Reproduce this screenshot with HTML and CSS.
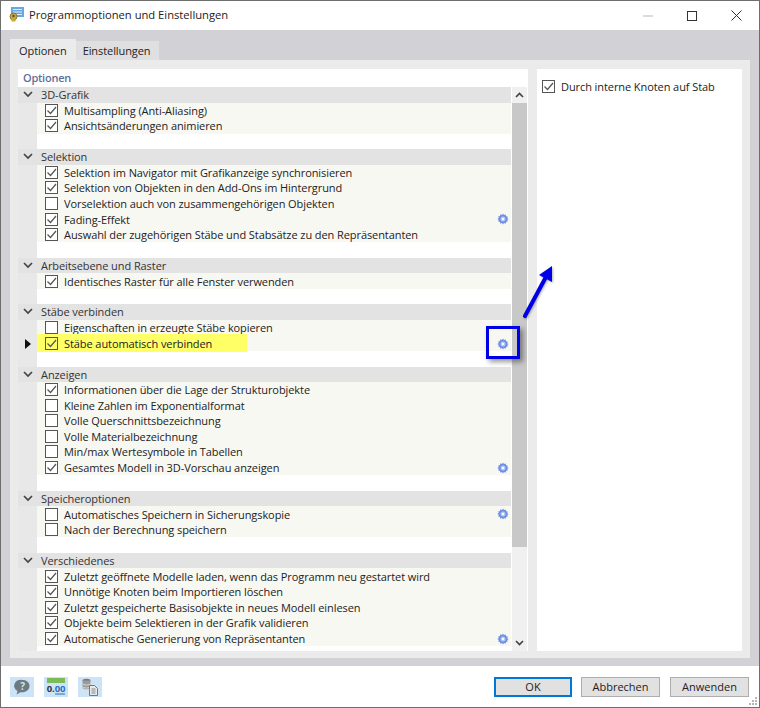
FILE: index.html
```html
<!DOCTYPE html>
<html lang="de">
<head>
    <meta charset="UTF-8">
    <title>Programmoptionen und Einstellungen</title>
    <link rel="stylesheet" href="styles.css">
</head>
<body>
    <svg class="defs" width="0" height="0">
        <symbol id="gear" viewBox="0 0 12 12">
            <path d="M6 .6l1 1.500 1.700-.6.300 1.800 1.800.3-.6 1.700L11.700 6l-1.500.9.6 1.700-1.800.3-.3 1.800-1.700-.6-1 1.500-1-1.500-1.700.6-.3-1.800-1.800-.3.6-1.700L.3 6l1.500-.9-.6-1.700 1.800-.3.300-1.800 1.700.6z" fill="#6f8fe6"/>
            <circle cx="6" cy="6" r="2.500" fill="#b4c6f4"/>
            <circle cx="6" cy="6" r="1.200" fill="#fff"/>
        </symbol>
    </svg>

    <div class="window">
        <div class="titlebar">
            <svg class="app-icon" width="16" height="15" viewBox="0 0 16 15">
                <rect x="2" y="0" width="13" height="10" fill="#6aa7e0"/>
                <path d="M4 2.500h9M4 5h9M4 7.500h9" stroke="#dcecfa" stroke-width="1"/>
                <circle cx="4.500" cy="9.500" r="3.500" fill="#c9a83a" stroke="#7a6a30" stroke-width=".8"/>
                <circle cx="4.500" cy="9" r="1.200" fill="#5a5030"/>
                <rect x="2.500" y="12" width="4" height="2.500" fill="#c9a83a"/>
            </svg>
            <span class="title-text">Programmoptionen und Einstellungen</span>
            <div class="win-buttons">
                <span class="win-min"></span>
                <span class="win-max"></span>
                <svg width="11" height="11" viewBox="0 0 11 11"><path d="M.5.500l10 10M10.500.500l-10 10" stroke="#333" fill="none"/></svg>
            </div>
        </div>

        <div class="content">
            <div class="tabs">
                <div class="tab active">Optionen</div>
                <div class="tab">Einstellungen</div>
            </div>
            <div class="tab-panel">
                <div class="options-box">
                    <div class="options-head">Optionen</div>
                    <div class="options-body">
                        <div class="tree" id="tree"></div>
                        <div class="scrollbar">
                            <svg class="scroll-arrow" width="9" height="6" viewBox="0 0 9 6"><path d="M1 5l3.500-3.500L8 5" stroke="#444" stroke-width="1.700" fill="none"/></svg>
                            <div class="scroll-thumb"></div>
                            <svg class="scroll-arrow bottom" width="9" height="6" viewBox="0 0 9 6"><path d="M1 1l3.500 3.500L8 1" stroke="#444" stroke-width="1.700" fill="none"/></svg>
                        </div>
                    </div>
                </div>
                <div class="detail-box">
                    <label class="check-row detail-row"><span class="check on"></span>Durch interne Knoten auf Stab</label>
                </div>
            </div>
        </div>

        <div class="footer">
            <div class="foot-icons">
                <span class="foot-icon">
                    <svg width="20" height="20" viewBox="0 0 20 20">
                        <path d="M10.500 3a6.500 6 0 0 1 2.500 11.700c-1.500.7-3 .8-4.500.5L4.500 17.500l1-3.500A6.500 6 0 0 1 10.500 3z" fill="#6d7a80"/>
                        <text x="10.500" y="13" class="q-mark">?</text>
                    </svg>
                </span>
                <span class="foot-icon">
                    <svg width="20" height="20" viewBox="0 0 20 20">
                        <rect x="1" y="1" width="18" height="5" fill="#7dbb5a"/>
                        <text x="10" y="15" class="num-mark">0.<tspan class="num-blue">00</tspan></text>
                        <path d="M9 17h10" stroke="#2a6fc0"/>
                    </svg>
                </span>
                <span class="foot-icon">
                    <svg width="20" height="20" viewBox="0 0 20 20">
                        <ellipse cx="6.500" cy="3.500" rx="4" ry="1.800" fill="#777"/>
                        <path d="M2.500 3.500v7c0 2.400 8 2.400 8 0v-7" fill="#9a9a9a"/>
                        <path d="M2.500 6.500c0 2 8 2 8 0M2.500 9.500c0 2 8 2 8 0" stroke="#ddd" fill="none"/>
                        <path d="M9.500 8.500h5l3 3v7h-8z" fill="#e8e8e8" stroke="#777"/>
                        <path d="M11.500 12h4M11.500 14h4M11.500 16h4" stroke="#888"/>
                    </svg>
                </span>
            </div>
            <div class="foot-buttons">
                <button class="btn btn-default">OK</button>
                <button class="btn">Abbrechen</button>
                <button class="btn">Anwenden</button>
            </div>
            <svg class="grip" width="10" height="10" viewBox="0 0 10 10"><path d="M7 1h2v2H7zM4 4h2v2H4zM7 4h2v2H7zM1 7h2v2H1zM4 7h2v2H4zM7 7h2v2H7z" fill="#b5b5b5"/></svg>
        </div>

        <!-- Markierungen ueber dem Dialog -->
        <div class="callout-box"></div>
        <svg class="callout-arrow" width="40" height="60" viewBox="0 0 40 60">
            <path d="M9 53L31 12" stroke="#0000e6" stroke-width="4" stroke-linecap="round" fill="none"/>
            <path d="M23 12L36 3v16z" fill="#0000e6"/>
        </svg>
    </div>

    <script>
        // [Text, Haken, Zahnrad, markiert]
        const groups = [
            ['3D-Grafik', [
                ['Multisampling (Anti-Aliasing)', 1],
                ['Ansichtsänderungen animieren', 1]
            ]],
            ['Selektion', [
                ['Selektion im Navigator mit Grafikanzeige synchronisieren', 1],
                ['Selektion von Objekten in den Add-Ons im Hintergrund', 1],
                ['Vorselektion auch von zusammengehörigen Objekten', 0],
                ['Fading-Effekt', 1, 1],
                ['Auswahl der zugehörigen Stäbe und Stabsätze zu den Repräsentanten', 1]
            ]],
            ['Arbeitsebene und Raster', [
                ['Identisches Raster für alle Fenster verwenden', 1]
            ]],
            ['Stäbe verbinden', [
                ['Eigenschaften in erzeugte Stäbe kopieren', 0],
                ['Stäbe automatisch verbinden', 1, 1, 1]
            ]],
            ['Anzeigen', [
                ['Informationen über die Lage der Strukturobjekte', 1],
                ['Kleine Zahlen im Exponentialformat', 0],
                ['Volle Querschnittsbezeichnung', 0],
                ['Volle Materialbezeichnung', 0],
                ['Min/max Wertesymbole in Tabellen', 0],
                ['Gesamtes Modell in 3D-Vorschau anzeigen', 1, 1]
            ]],
            ['Speicheroptionen', [
                ['Automatisches Speichern in Sicherungskopie', 0, 1],
                ['Nach der Berechnung speichern', 0]
            ]],
            ['Verschiedenes', [
                ['Zuletzt geöffnete Modelle laden, wenn das Programm neu gestartet wird', 1],
                ['Unnötige Knoten beim Importieren löschen', 1],
                ['Zuletzt gespeicherte Basisobjekte in neues Modell einlesen', 1],
                ['Objekte beim Selektieren in der Grafik validieren', 1],
                ['Automatische Generierung von Repräsentanten', 1, 1]
            ]]
        ];

        const gear = '<svg class="gear" width="12" height="12"><use href="#gear"/></svg>';
        let html = '';
        groups.forEach(([name, rows], i) => {
            html += `<div class="group-head"><svg class="chevron" width="10" height="7" viewBox="0 0 10 7"><path d="M1 1l4 4 4-4" stroke="#444" stroke-width="1.700" fill="none"/></svg>${name}</div>`;
            rows.forEach(([text, on, hasGear, marked]) => {
                const pointer = marked ? '<span class="pointer"></span>' : '';
                const label = `<span class="check ${on ? 'on' : ''}"></span>${text}`;
                html += `<div class="row">${pointer}<div class="check-row ${marked ? 'marked' : ''}">${label}</div>${hasGear ? gear : ''}</div>`;
            });
            if (i < groups.length - 1) html += '<div class="row blank"></div>';
        });
        document.getElementById('tree').innerHTML = html;
    </script>
</body>
</html>
```

FILE: styles.css
```css
* {
    margin: 0;
    padding: 0;
    box-sizing: border-box;
}

body {
    font-family: "Open Sans", "Noto Sans", sans-serif;
    font-size: 11px;
    letter-spacing: -0.08px;
    color: #222;
    background: #fff;
    overflow: hidden;
}

.defs {
    position: absolute;
}

.window {
    position: relative;
    width: 760px;
    height: 708px;
    border: 1px solid #6e6e6e;
    display: flex;
    flex-direction: column;
    background: #fff;
}

.titlebar {
    height: 29px;
    flex: none;
    display: flex;
    align-items: center;
    padding-left: 8px;
    background: #fff;
}

.app-icon {
    margin: 0 4px 2px 0;
}

.title-text {
    font-size: 11.2px;
    letter-spacing: 0;
    margin-bottom: 2px;
    color: #222;
}

.win-buttons {
    margin-left: auto;
    display: flex;
    align-items: center;
    gap: 34px;
    padding-right: 17px;
}

.win-min {
    width: 10px;
    height: 2px;
    background: #dcdcdc;
}

.win-max {
    width: 10px;
    height: 10px;
    border: 1px solid #333;
}

.content {
    flex: 1;
    background: #d2d2d6;
    padding: 11px 9px 8px;
    display: flex;
    flex-direction: column;
}

.tabs {
    display: flex;
    height: 19px;
    flex: none;
}

.tab {
    padding: 0 8px 0 7px;
    line-height: 20px;
    background: #dfdfe1;
}

.tab.active {
    padding: 2px 9px 0;
    margin-top: -2px;
    background: #ebebeb;
}

.tab-panel {
    flex: 1;
    background: #ebebeb;
    padding: 9px 8px 7px;
    display: flex;
    gap: 9px;
    min-height: 0;
}

.options-box {
    width: 510px;
    background: #fff;
    display: flex;
    flex-direction: column;
}

.options-head {
    height: 18px;
    line-height: 17px;
    padding-left: 5px;
    color: #5f6f9a;
    font-weight: 600;
    letter-spacing: -0.25px;
}

.options-body {
    flex: 1;
    display: flex;
    min-height: 0;
}

.tree {
    width: 493px;
    background: linear-gradient(to right, #e8e8e8 19px, #fff 19px);
}

.group-head {
    height: 15.54px;
    line-height: 15.54px;
    background: #e3e3e3;
    padding-left: 23px;
    position: relative;
    color: #333;
}

.chevron {
    position: absolute;
    left: 5px;
    top: 4px;
}

.row {
    height: 15.54px;
    margin-left: 19px;
    background: #f8f8f2;
    display: flex;
    align-items: center;
    position: relative;
}

.row.blank {
    background: #fff;
}

.check-row {
    display: flex;
    align-items: center;
    white-space: nowrap;
}

.check-row.marked {
    background: #ffff66;
    width: 210px;
    height: 18px;
    position: relative;
    z-index: 1;
}

.check {
    width: 13px;
    height: 13px;
    margin: 0 6px 0 8px;
    flex: none;
    border: 1px solid #555;
    background: #fff no-repeat center;
}

.check.on {
    background-image: url("data:image/svg+xml,%3Csvg xmlns='http://www.w3.org/2000/svg' width='11' height='11'%3E%3Cpath d='M1.500 5.500l3 3 5.500-6.500' stroke='%23555' stroke-width='1.200' fill='none'/%3E%3C/svg%3E");
}

.marked .check {
    background-color: transparent;
}

.pointer {
    position: absolute;
    left: -12px;
    top: 3px;
    border-left: 6px solid #111;
    border-top: 5px solid transparent;
    border-bottom: 5px solid transparent;
}

.gear {
    position: absolute;
    right: 2px;
    top: 2px;
}

.scrollbar {
    width: 15px;
    margin: 0 1px;
    background: #f0f0f0;
    position: relative;
}

.scroll-arrow {
    position: absolute;
    left: 3px;
    top: 5px;
}

.scroll-arrow.bottom {
    top: auto;
    bottom: 5px;
}

.scroll-thumb {
    position: absolute;
    left: 0;
    right: 0;
    top: 16px;
    height: 444px;
    background: #c8c8c8;
}

.detail-box {
    flex: 1;
    background: #fff;
    padding-top: 10px;
}

.detail-row .check {
    margin-left: 5px;
}

.footer {
    height: 41px;
    flex: none;
    display: flex;
    align-items: center;
    padding: 0 10px 0 9px;
    position: relative;
}

.foot-icons {
    display: flex;
    gap: 10px;
}

.foot-icon {
    width: 24px;
    height: 20px;
    background: #cde4f7;
    display: flex;
    align-items: center;
    justify-content: center;
}

.q-mark {
    font-size: 10px;
    font-weight: 700;
    fill: #cde4f7;
    text-anchor: middle;
}

.num-mark {
    font-size: 9.500px;
    font-weight: 700;
    fill: #334;
    text-anchor: middle;
}

.num-blue {
    fill: #2a6fc0;
}

.foot-buttons {
    margin-left: auto;
    display: flex;
    gap: 10px;
}

.btn {
    width: 79px;
    height: 20px;
    font-family: inherit;
    font-size: 11px;
    color: #222;
    background: #e1e1e1;
    border: 1px solid #adadad;
}

.btn-default {
    width: 78px;
    margin-right: -1px;
    border: 2px solid #0078d7;
}

.grip {
    position: absolute;
    right: 1px;
    bottom: 1px;
}

.callout-box {
    position: absolute;
    left: 485px;
    top: 325px;
    width: 34px;
    height: 33px;
    border: 3px solid #0000e6;
    box-shadow: 3px 3px 5px rgba(0, 0, 0, 0.4);
    z-index: 2;
}

.callout-arrow {
    position: absolute;
    left: 515px;
    top: 262px;
    filter: drop-shadow(1px 1px 1px rgba(0, 0, 0, 0.3));
    z-index: 2;
}
```
